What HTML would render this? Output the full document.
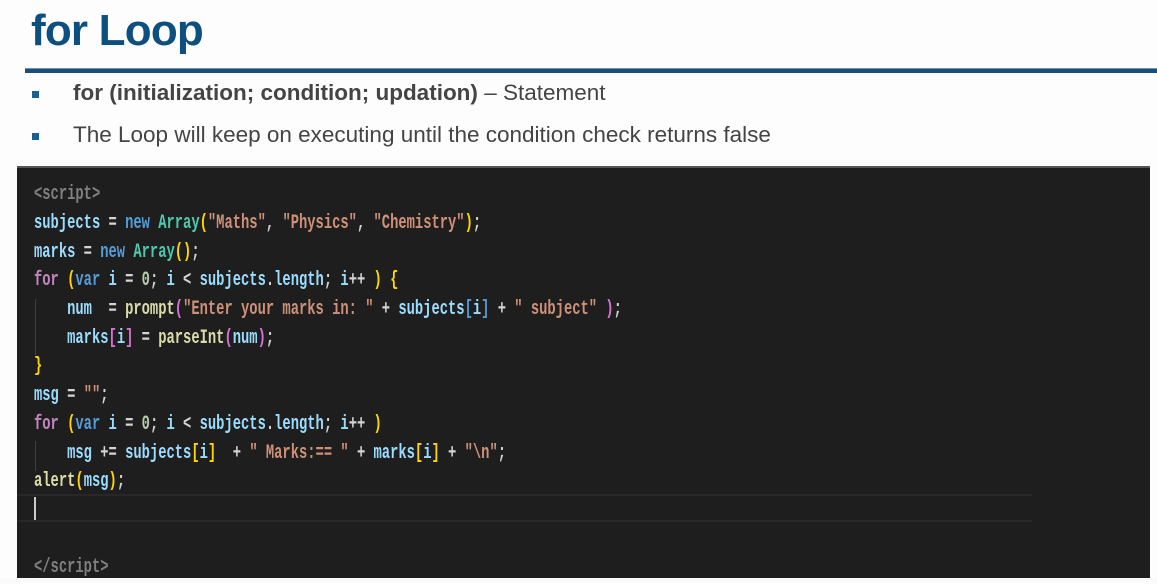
<!DOCTYPE html>
<html><head><meta charset="utf-8"><style>
body{margin:0;width:1157px;height:583px;background:#fdfdfd;overflow:hidden;position:relative;font-family:"Liberation Sans",sans-serif}
.t{position:absolute;left:31px;top:6px;font-size:44px;font-weight:bold;color:#0d4f7e;letter-spacing:-0.8px}
.rule{position:absolute;left:25px;right:0;top:68px;height:4px;background:#1a4e78;border-top:1px solid #6d93b3}
.b{position:absolute;left:73px;font-size:22.5px;color:#444}
.sq{position:absolute;left:32px;width:7px;height:7px;background:#1d5e91}
.code{position:absolute;left:17px;top:166px;width:1133px;height:412px;background:#1e1e1e;border-top:2px solid #555}
.below{position:absolute;left:0;top:578px;width:1157px;height:5px;background:#fafafa}
.l{position:absolute;left:17px;font-family:"Liberation Mono",monospace;font-size:13.8px;font-weight:bold;white-space:pre;color:#d4d4d4;transform:scaleY(1.45);transform-origin:left center;height:20px;line-height:20px}
.k{color:#569cd6}.v{color:#9cdcfe}.f{color:#dcdcaa}.s{color:#ce9178}.c{color:#4ec9b0}.p{color:#c586c0}.n{color:#b5cea8}.g{color:#808080}.y{color:#ffd700}.m{color:#da70d6}
.guide{position:absolute;left:18px;width:1px;background:#404040}
.hl{position:absolute;left:0;width:1015px;height:2px;background:#282828}
</style></head><body>
<div class="t">for Loop</div>
<div class="rule"></div>
<div class="sq" style="top:91px"></div>
<div class="b" style="top:80px"><b>for (initialization; condition; updation)</b> – Statement</div>
<div class="sq" style="top:133px"></div>
<div class="b" style="top:122px">The Loop will keep on executing until the condition check returns false</div>
<div class="code">
<div class="guide" style="top:131px;height:56px"></div>
<div class="guide" style="top:273px;height:30px"></div>
<div class="hl" style="top:326px"></div>
<div class="hl" style="top:352px"></div>
<div style="position:absolute;left:17px;top:329px;width:2px;height:23px;background:#ccc"></div>
<div class="l" style="top:18px"><span class="g">&lt;script&gt;</span></div>
<div class="l" style="top:47px"><span class="v">subjects</span> = <span class="k">new</span> <span class="c">Array</span><span class="y">(</span><span class="s">"Maths"</span>, <span class="s">"Physics"</span>, <span class="s">"Chemistry"</span><span class="y">)</span>;</div>
<div class="l" style="top:76px"><span class="v">marks</span> = <span class="k">new</span> <span class="c">Array</span><span class="y">()</span>;</div>
<div class="l" style="top:104px"><span class="p">for</span> <span class="y">(</span><span class="k">var</span> <span class="v">i</span> = <span class="n">0</span>; <span class="v">i</span> &lt; <span class="v">subjects</span>.<span class="v">length</span>; <span class="v">i</span>++ <span class="y">)</span> <span class="y">{</span></div>
<div class="l" style="top:133px">    <span class="v">num</span>  = <span class="f">prompt</span><span class="m">(</span><span class="s">"Enter your marks in: "</span> + <span class="v">subjects</span><span class="k">[</span><span class="v">i</span><span class="k">]</span> + <span class="s">" subject"</span> <span class="m">)</span>;</div>
<div class="l" style="top:162px">    <span class="v">marks</span><span class="m">[</span><span class="v">i</span><span class="m">]</span> = <span class="f">parseInt</span><span class="m">(</span><span class="v">num</span><span class="m">)</span>;</div>
<div class="l" style="top:190px"><span class="y">}</span></div>
<div class="l" style="top:219px"><span class="v">msg</span> = <span class="s">""</span>;</div>
<div class="l" style="top:248px"><span class="p">for</span> <span class="y">(</span><span class="k">var</span> <span class="v">i</span> = <span class="n">0</span>; <span class="v">i</span> &lt; <span class="v">subjects</span>.<span class="v">length</span>; <span class="v">i</span>++ <span class="y">)</span></div>
<div class="l" style="top:277px">    <span class="v">msg</span> += <span class="v">subjects</span><span class="y">[</span><span class="v">i</span><span class="y">]</span>  + <span class="s">" Marks:== "</span> + <span class="v">marks</span><span class="y">[</span><span class="v">i</span><span class="y">]</span> + <span class="s">"\n"</span>;</div>
<div class="l" style="top:305px"><span class="f">alert</span><span class="y">(</span><span class="v">msg</span><span class="y">)</span>;</div>
<div class="l" style="top:391px"><span class="g">&lt;/script&gt;</span></div>
</div>
<div class="below"></div>
</body></html>
